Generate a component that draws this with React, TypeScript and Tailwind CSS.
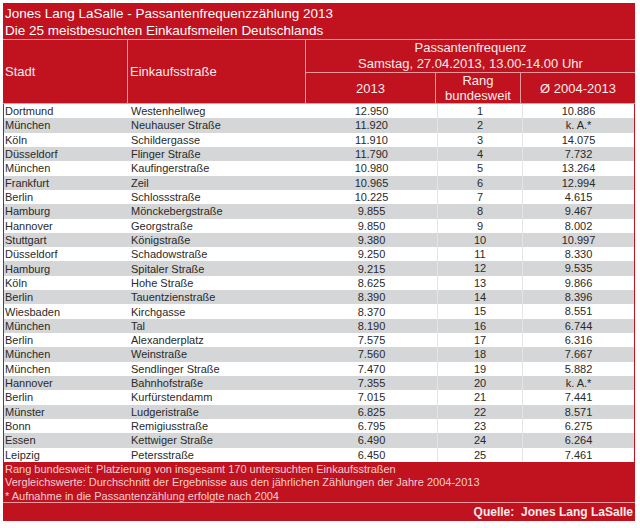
import React from "react";

const rows: [string, string, string, string, string][] = [
  ["Dortmund", "Westenhellweg", "12.950", "1", "10.886"],
  ["München", "Neuhauser Straße", "11.920", "2", "k. A.*"],
  ["Köln", "Schildergasse", "11.910", "3", "14.075"],
  ["Düsseldorf", "Flinger Straße", "11.790", "4", "7.732"],
  ["München", "Kaufingerstraße", "10.980", "5", "13.264"],
  ["Frankfurt", "Zeil", "10.965", "6", "12.994"],
  ["Berlin", "Schlossstraße", "10.225", "7", "4.615"],
  ["Hamburg", "Mönckebergstraße", "9.855", "8", "9.467"],
  ["Hannover", "Georgstraße", "9.850", "9", "8.002"],
  ["Stuttgart", "Königstraße", "9.380", "10", "10.997"],
  ["Düsseldorf", "Schadowstraße", "9.250", "11", "8.330"],
  ["Hamburg", "Spitaler Straße", "9.215", "12", "9.535"],
  ["Köln", "Hohe Straße", "8.625", "13", "9.866"],
  ["Berlin", "Tauentzienstraße", "8.390", "14", "8.396"],
  ["Wiesbaden", "Kirchgasse", "8.370", "15", "8.551"],
  ["München", "Tal", "8.190", "16", "6.744"],
  ["Berlin", "Alexanderplatz", "7.575", "17", "6.316"],
  ["München", "Weinstraße", "7.560", "18", "7.667"],
  ["München", "Sendlinger Straße", "7.470", "19", "5.882"],
  ["Hannover", "Bahnhofstraße", "7.355", "20", "k. A.*"],
  ["Berlin", "Kurfürstendamm", "7.015", "21", "7.441"],
  ["Münster", "Ludgeristraße", "6.825", "22", "8.571"],
  ["Bonn", "Remigiusstraße", "6.795", "23", "6.275"],
  ["Essen", "Kettwiger Straße", "6.490", "24", "6.264"],
  ["Leipzig", "Petersstraße", "6.450", "25", "7.461"],
];

export default function App() {
  return (
    <div className="w-[640px] h-[528px] bg-white pt-[3px] pl-[3px] font-['Liberation_Sans',Arial,sans-serif]">
      <div className="w-[632px] bg-[#c0121f]">
        {/* title */}
        <div className="h-[37px] border-b border-[#e99a9f] px-[2px] pt-[2px] text-[13.5px] leading-[17px] text-white">
          <div>Jones Lang LaSalle - Passantenfrequenzzählung 2013</div>
          <div>Die 25 meistbesuchten Einkaufsmeilen Deutschlands</div>
        </div>

        {/* header */}
        <div className="flex h-[64px] border-b border-[#e99a9f] text-[13px] leading-[15px] text-[#fcecec]">
          <div className="flex w-[125px] items-center border-r border-[#e99a9f] pl-[2px]">Stadt</div>
          <div className="flex w-[178px] items-center border-r border-[#e99a9f] pl-[2px]">Einkaufsstraße</div>
          <div className="flex flex-1 flex-col">
            <div className="flex h-[35px] flex-col items-center justify-center border-b border-[#e99a9f] leading-[16px]">
              <div>Passantenfrequenz</div>
              <div>Samstag, 27.04.2013, 13.00-14.00 Uhr</div>
            </div>
            <div className="flex flex-1">
              <div className="flex w-[130px] items-center justify-center border-r border-[#e99a9f]">2013</div>
              <div className="flex w-[85px] flex-col items-center justify-center border-r border-[#e99a9f] leading-[15px]">
                <div>Rang</div>
                <div>bundesweit</div>
              </div>
              <div className="flex flex-1 items-center justify-center">Ø 2004-2013</div>
            </div>
          </div>
        </div>

        {/* data rows */}
        <div className="px-px text-[11px] leading-[14px] text-[#2a2a2a]">
          {rows.map((r, i) => (
            <div key={i} className={`flex h-[14.32px] items-center ${i % 2 === 1 ? "bg-[#d4d6d7]" : "bg-white"}`}>
              <div className="w-[124px] pl-[1px]">{r[0]}</div>
              <div className="w-[178px] pl-[3px]">{r[1]}</div>
              <div className="w-[131px] text-center">{r[2]}</div>
              <div className="h-full w-[85px] border-l border-[#e4e4e4] text-center">{r[3]}</div>
              <div className="h-full flex-1 border-l border-[#e4e4e4] text-center">{r[4]}</div>
            </div>
          ))}
        </div>

        {/* notes */}
        <div className="h-[41px] border-b border-[#e99a9f] px-[2px] pt-px text-[11px] leading-[13.5px] text-[#f6cfd1]">
          <div>Rang bundesweit: Platzierung von insgesamt 170 untersuchten Einkaufsstraßen</div>
          <div>Vergleichswerte: Durchschnitt der Ergebnisse aus den jährlichen Zählungen der Jahre 2004-2013</div>
          <div>* Aufnahme in die Passantenzählung erfolgte nach 2004</div>
        </div>
        <div className="flex h-[18px] items-center justify-end pr-[2px] text-[12px] font-bold text-[#fcecec]">
          Quelle:&nbsp; Jones Lang LaSalle
        </div>
      </div>
    </div>
  );
}
